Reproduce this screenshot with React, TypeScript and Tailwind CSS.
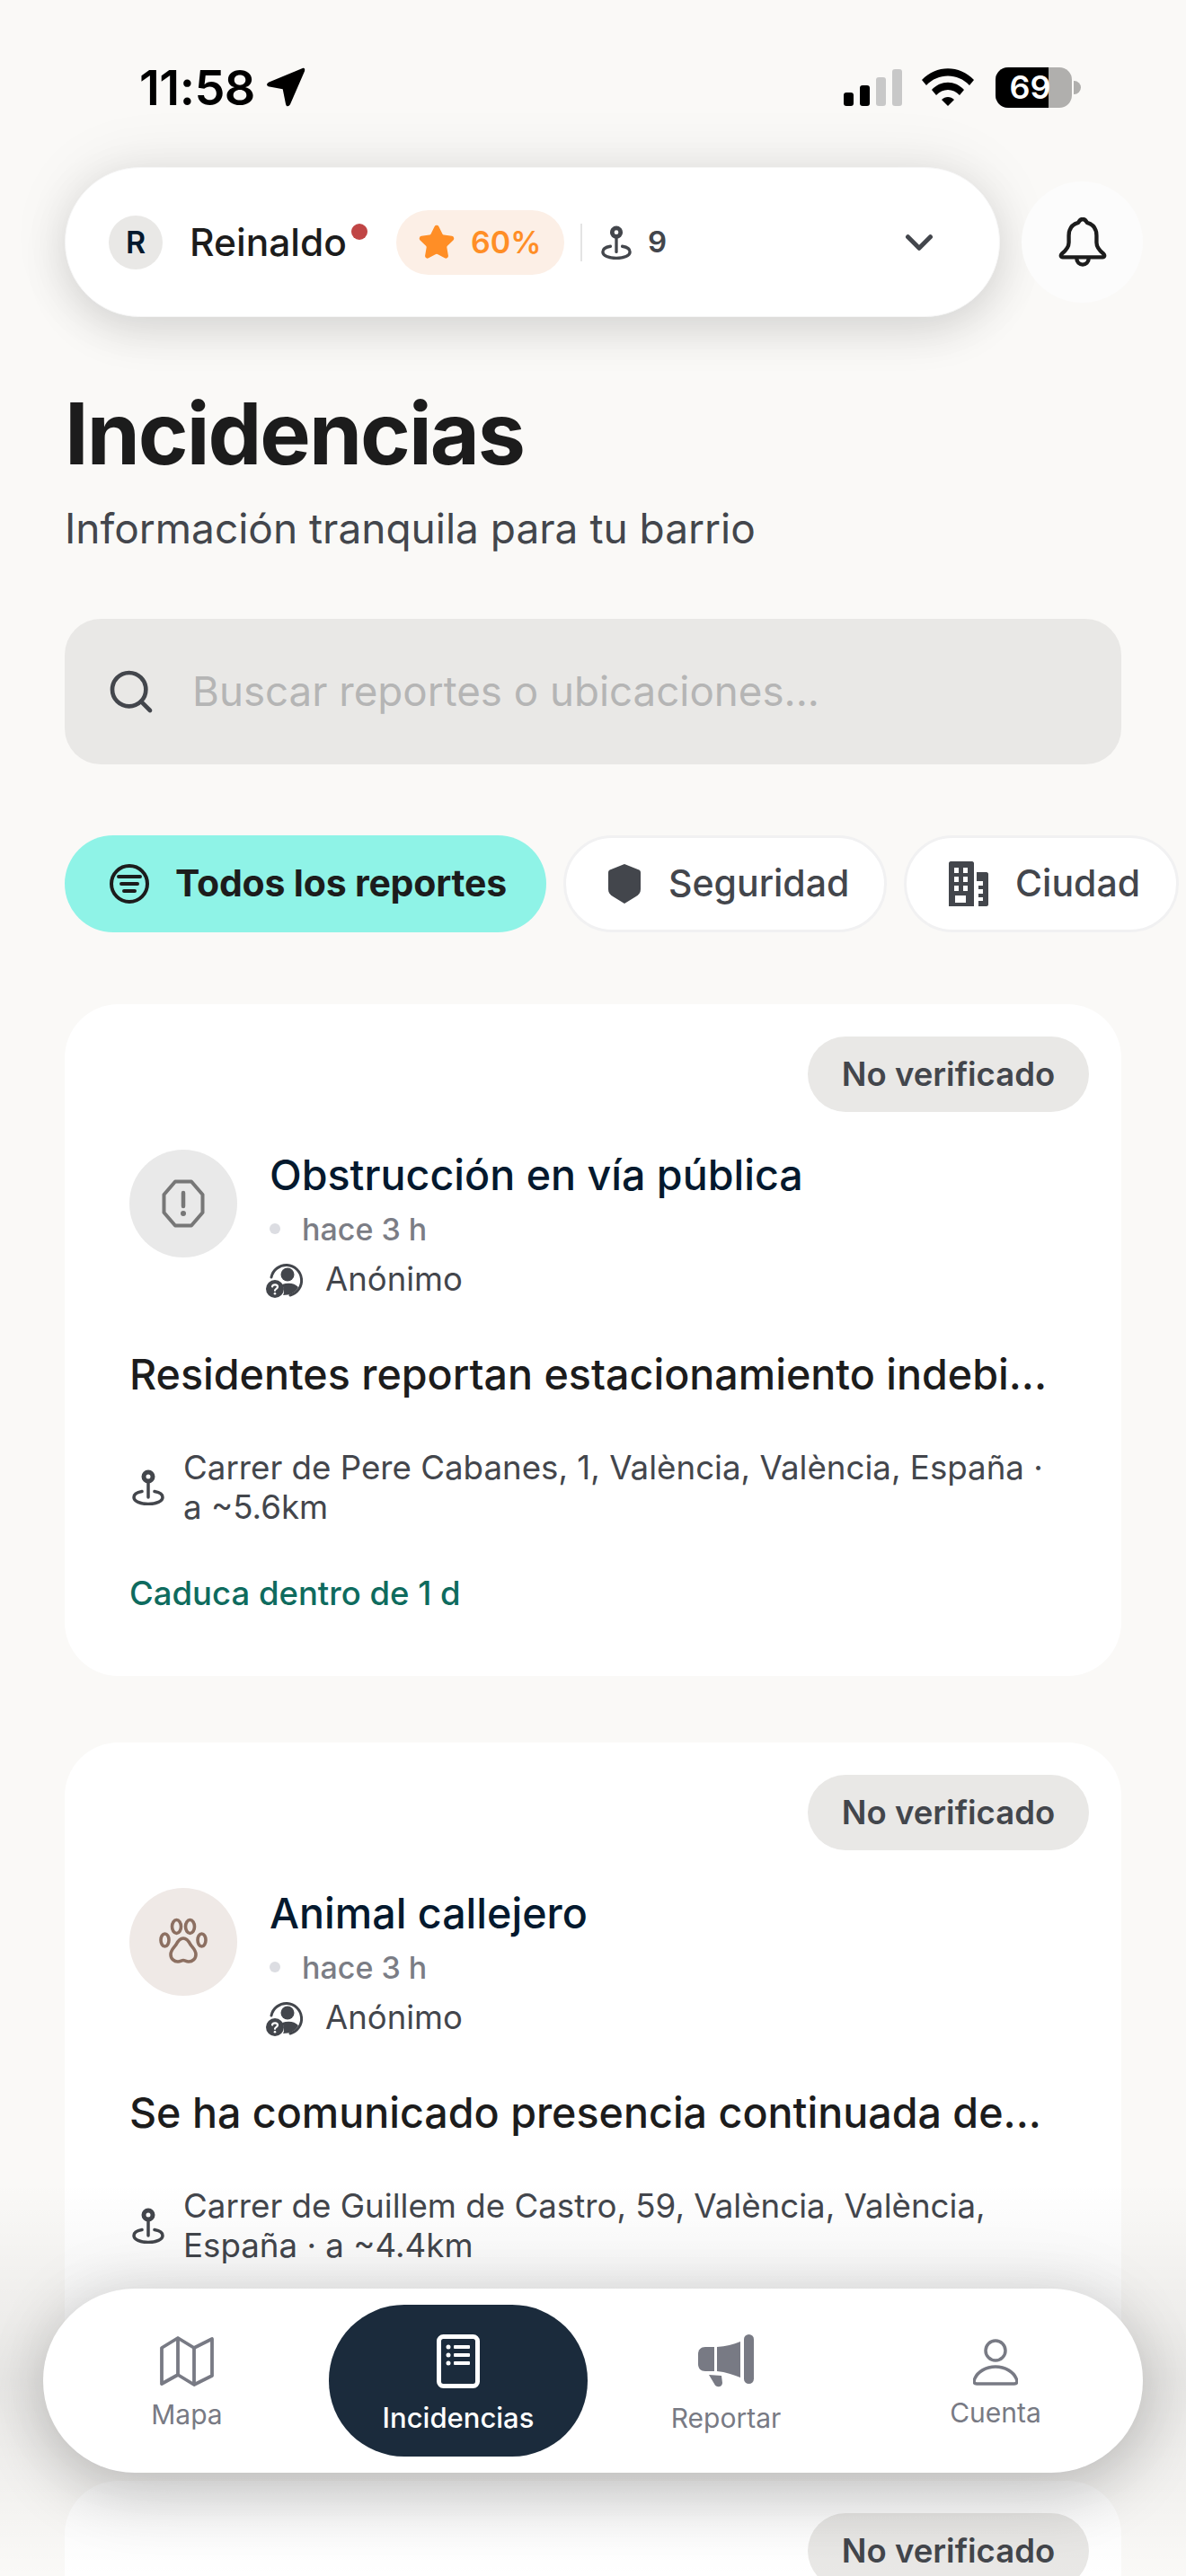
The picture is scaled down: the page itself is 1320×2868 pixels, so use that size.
import {ReactNode} from "react";
import {ChevronDown, Search, Star} from "lucide-react";

const PinIcon = ({className}: {className: string}) => (
    <svg viewBox="0 0 36 40" className={className} fill="none">
        <circle cx="18" cy="8" r="5" stroke="currentColor" strokeWidth="5"/>
        <path d="M18 14v17" stroke="currentColor" strokeWidth="3.500" strokeLinecap="round"/>
        <path d="M11 24.500C5 25.500 2 28 2 31c0 4.500 7 7.500 16 7.500s16-3 16-7.500c0-3-3-5.500-9-6.500" stroke="currentColor" strokeWidth="3.500" strokeLinecap="round"/>
    </svg>
);

const AnonIcon = () => (
    <svg viewBox="0 0 44 44" className="w-[44px] h-[44px] text-[#43464c]" fill="none">
        <path d="M6 20a17 17 0 1 1 21 20" stroke="currentColor" strokeWidth="3" strokeLinecap="round"/>
        <circle cx="24" cy="17" r="7.500" fill="currentColor"/>
        <path d="M18 28c7-2.500 14-1.500 18 3-3 6-9 9-17 9 2-3 1-8-1-12z" fill="currentColor"/>
        <circle cx="10" cy="33" r="10" fill="currentColor"/>
        <path d="M7 30.500c.5-2.800 6-2.800 6 .3 0 2-3 2-3 4" stroke="#fff" strokeWidth="2.200" strokeLinecap="round"/>
        <circle cx="10" cy="38.200" r="1.300" fill="#fff"/>
    </svg>
);

const StopIcon = () => (
    <svg viewBox="0 0 48 54" className="w-[48px] h-[54px] text-[#777777]" fill="none">
        <path d="M15 2.500h18L45.500 17v20L33 51.500H15L2.500 37V17z" stroke="currentColor" strokeWidth="4" strokeLinejoin="round"/>
        <path d="M24 15v15" stroke="currentColor" strokeWidth="4.500" strokeLinecap="round"/>
        <circle cx="24" cy="38" r="3" fill="currentColor"/>
    </svg>
);

const PawIcon = () => (
    <svg viewBox="0 0 54 54" className="w-[54px] h-[54px] text-[#8c6f61]" fill="none" stroke="currentColor" strokeWidth="3.600">
        <ellipse cx="19.500" cy="10" rx="5" ry="7.500"/>
        <ellipse cx="34.500" cy="10" rx="5" ry="7.500"/>
        <ellipse cx="6.500" cy="25" rx="4.500" ry="7"/>
        <ellipse cx="47.500" cy="25" rx="4.500" ry="7"/>
        <path d="M27 23c-4 0-6 3-8 7-2 3-6 6-6 11 0 5 4 8 8 8 3 0 4-1.500 6-1.500s3 1.500 6 1.500c4 0 8-3 8-8 0-5-4-8-6-11-2-4-4-7-8-7z"/>
    </svg>
);

const Badge = () => (
    <div className="flex justify-end -mr-[36px]">
        <span className="h-[84px] w-[313px] rounded-full bg-[#e9e8e6] text-[#43464c] text-[36.500px] font-semibold flex items-center justify-center">No verificado</span>
    </div>
);

const Report = ({title, desc, address, icon, iconBg, footer}: {
    title: string, desc: string, address: string[], icon: ReactNode, iconBg: string, footer?: string
}) => (
    <div className="bg-white rounded-[60px] h-[748px] shrink-0 pt-[36px] px-[72px]">
        <Badge/>
        <div className="flex mt-[42px]">
            <div className={`w-[120px] h-[120px] rounded-full flex items-center justify-center shrink-0 ${iconBg}`}>{icon}</div>
            <div className="ml-[36px]">
                <div className="text-[46.600px] leading-[56px] text-[#04192e] font-[450]">{title}</div>
                <div className="flex items-center h-[54px] mt-[5px] text-[34px] text-[#7b7d85] font-medium">
                    <span className="w-[12px] h-[12px] rounded-full bg-[#dcdde2] mr-[24px]"/>
                    hace 3 h
                </div>
                <div className="flex items-center h-[54px] text-[36.500px] text-[#43464c] -ml-[4px] mt-[2px]">
                    <AnonIcon/>
                    <span className="ml-[22px]">Anónimo</span>
                </div>
            </div>
        </div>
        <div className="mt-[51px] text-[46.600px] leading-[56px] text-[#1c1c1c] font-[450] whitespace-nowrap">{desc}</div>
        <div className="flex items-center mt-[54px] h-[88px]">
            <PinIcon className="w-[36px] h-[40px] text-[#43464c] shrink-0 ml-[3px]"/>
            <div className="ml-[21px] text-[36.700px] leading-[44px] text-[#43464c] whitespace-nowrap">
                {address.map((line) => <div key={line}>{line}</div>)}
            </div>
        </div>
        {footer && <div className="mt-[52px] text-[36.500px] leading-[44px] font-medium text-[#0e6b5e]">{footer}</div>}
    </div>
);

const App = () => {
    return (
        <div className="relative w-[1320px] h-[2868px] overflow-hidden bg-[#faf9f7] font-['Inter',sans-serif]">
            <div className="flex items-center justify-between h-[120px] pt-[74px] pl-[155px] pr-[117px]">
                <div className="flex items-center text-[54px] font-semibold text-black tracking-[-0.5px]">
                    11:58
                    <svg viewBox="0 0 40 40" className="w-[44px] h-[44px] ml-[12px]" fill="black">
                        <path d="M37 1 3 15c-3 1.500-2.500 4 .5 4.500L17 22l3 15c.5 3 3 3 4.500.5L39 4c1-2.500-.5-4-2-3z"/>
                    </svg>
                </div>
                <div className="flex items-center">
                    <div className="flex items-end gap-[7px] h-[41px]">
                        <span className="w-[11px] h-[15px] rounded-[3px] bg-black"/>
                        <span className="w-[11px] h-[23px] rounded-[3px] bg-black"/>
                        <span className="w-[11px] h-[32px] rounded-[3px] bg-[#c8c8c8]"/>
                        <span className="w-[11px] h-[41px] rounded-[3px] bg-[#c8c8c8]"/>
                    </div>
                    <svg viewBox="0 0 58 42" className="w-[58px] h-[42px] ml-[22px]" fill="black">
                        <path d="M0 13C16-4 42-4 58 13l-5 6C40 5 18 5 5 19z"/>
                        <path d="M11 24c10-11 26-11 36 0l-5 6c-7-8-19-8-26 0z"/>
                        <path d="M22 35c4-4 10-4 14 0l-7 7z"/>
                    </svg>
                    <div className="relative ml-[24px] w-[85px] h-[45px] rounded-[14px] overflow-hidden bg-[#b0afad]">
                        <div className="absolute left-0 top-0 h-full w-[59px] bg-black"/>
                        <span className="absolute inset-0 flex items-center justify-center text-white text-[36px] leading-none font-semibold -ml-[8px]">69</span>
                    </div>
                    <span className="w-[8px] h-[15px] rounded-r-full bg-[#b0afad] ml-[2px]"/>
                </div>
            </div>

            <div className="flex items-center gap-[24px] mt-[66px] pl-[72px] pr-[48px]">
                <div className="flex items-center w-[1041px] h-[167px] rounded-[84px] bg-white border border-[#f6f6f6] pl-[48px] pr-[64px] shadow-[0_16px_50px_rgba(0,0,0,0.12),0_-6px_70px_rgba(0,0,0,0.07)]">
                    <span className="w-[60px] h-[60px] rounded-full bg-[#e9e8e6] text-[#04192e] text-[34px] font-semibold flex items-center justify-center">R</span>
                    <div className="relative ml-[30px] text-[42.500px] font-medium text-[#1c1c1c]">
                        Reinaldo
                        <span className="absolute -right-[23px] top-[11px] w-[18px] h-[18px] rounded-full bg-[#c04545]"/>
                    </div>
                    <div className="flex items-center ml-[55px] w-[187px] h-[72px] rounded-full bg-[#fcefe6] pl-[24px]">
                        <Star className="w-[42px] h-[42px] text-[#ff8e26]" fill="#ff8e26"/>
                        <span className="ml-[17px] text-[34px] font-semibold text-[#ff8e26]">60%</span>
                    </div>
                    <span className="w-[2px] h-[42px] bg-[#e4e4e4] ml-[18px]"/>
                    <PinIcon className="w-[34px] h-[38px] text-[#43464c] ml-[21px]"/>
                    <span className="ml-[18px] text-[33px] font-semibold text-[#43464c]">9</span>
                    <ChevronDown className="ml-auto w-[50px] h-[50px] text-[#43464c]" strokeWidth={2.4}/>
                </div>
                <div className="w-[135px] h-[135px] rounded-full bg-[#fcfcfc] flex items-center justify-center">
                    <svg viewBox="0 0 56 58" className="w-[54px] h-[56px] text-[#1c1c1c]" fill="none" stroke="currentColor" strokeWidth="4.500" strokeLinejoin="round">
                        <path d="M28 2c3 0 4 2 5 4 7 2 11 7 11 15v8c0 5 3 9 8 13 2 2 1 4-1 4H5c-2 0-3-2-1-4 5-4 8-8 8-13v-8c0-8 4-13 11-15 1-2 2-4 5-4z"/>
                        <path d="M21 47c0 10 14 10 14 0"/>
                    </svg>
                </div>
            </div>

            <div className="px-[72px] mt-[78px]">
                <h1 className="text-[95px] leading-[104px] font-bold text-[#1c1c1c] tracking-[-2px]">Incidencias</h1>
                <p className="mt-[25px] text-[46px] leading-[56px] text-[#43464c]">Información tranquila para tu barrio</p>
                <div className="flex items-center mt-[73px] h-[162px] rounded-[40px] bg-[#e9e8e6] pl-[46px]">
                    <Search className="w-[56px] h-[56px] text-[#43464c]" strokeWidth={2}/>
                    <span className="ml-[40px] text-[45.700px] text-[#b5b5b5]">Buscar reportes o ubicaciones...</span>
                </div>
                <div className="flex items-center gap-[19px] mt-[79px] h-[108px] w-[1300px]">
                    <div className="flex items-center w-[536px] h-[108px] rounded-[54px] bg-[#8ff3e7] pl-[50px]">
                        <svg viewBox="0 0 44 44" className="w-[44px] h-[44px] text-[#1c1c1c]" fill="none" stroke="currentColor" strokeWidth="4" strokeLinecap="round">
                            <circle cx="22" cy="22" r="20"/>
                            <path d="M10 14h24M13 22h18M16 30h12"/>
                        </svg>
                        <span className="ml-[29px] text-[41px] font-bold text-[#1c1c1c] tracking-[-0.2px]">Todos los reportes</span>
                    </div>
                    <div className="flex items-center w-[360px] h-[108px] rounded-[54px] bg-white border-[3px] border-[#f1f1f2] pl-[47px]">
                        <svg viewBox="0 0 36 44" className="w-[36px] h-[44px] text-[#43464c]" fill="currentColor">
                            <path d="M18 0 33 6c2 .8 3 1.500 3 3.500V28c0 4-2 6-5 8L18 44 5 36c-3-2-5-4-5-8V9.500C0 7.500 1 6.800 3 6z"/>
                        </svg>
                        <span className="ml-[31px] text-[41px] font-medium text-[#43464c]">Seguridad</span>
                    </div>
                    <div className="flex items-center w-[306px] h-[108px] rounded-[54px] bg-white border-[3px] border-[#f1f1f2] pl-[47px]">
                        <svg viewBox="0 0 44 50" className="w-[44px] h-[50px] text-[#43464c]" fill="currentColor">
                            <path fillRule="evenodd" d="M2 0h24c1 0 2 1 2 2v48H0V2c0-1 1-2 2-2zM6 7v6h5V7zm10 0v6h5V7zM6 17v6h5v-6zm10 0v6h5v-6zM6 27v6h5v-6zm10 0v6h5v-6zM7 38v8h12v-8z"/>
                            <path fillRule="evenodd" d="M31 12h11c1 0 2 1 2 2v34c0 1-1 2-2 2H33v-6h5v-4h-5v-4h5v-5h-5v-4h5v-5h-7z"/>
                        </svg>
                        <span className="ml-[30px] text-[41px] font-medium text-[#43464c]">Ciudad</span>
                    </div>
                </div>
                <div className="flex flex-col gap-[74px] mt-[80px]">
                    <Report
                        title="Obstrucción en vía pública"
                        desc="Residentes reportan estacionamiento indebi..."
                        address={["Carrer de Pere Cabanes, 1, València, València, España ·", "a ~5.6km"]}
                        icon={<StopIcon/>}
                        iconBg="bg-[#e9e9e9]"
                        footer="Caduca dentro de 1 d"
                    />
                    <Report
                        title="Animal callejero"
                        desc="Se ha comunicado presencia continuada de..."
                        address={["Carrer de Guillem de Castro, 59, València, València,", "España · a ~4.4km"]}
                        icon={<PawIcon/>}
                        iconBg="bg-[#efe9e6]"
                    />
                    <div className="bg-white rounded-[60px] h-[748px] shrink-0 pt-[36px] px-[72px]">
                        <Badge/>
                    </div>
                </div>
            </div>

            <div className="absolute left-0 right-0 top-[2430px] bottom-0 bg-gradient-to-b from-transparent via-[#00000012] to-transparent"/>
            <div className="absolute left-[48px] top-[2548px] w-[1224px] h-[205px] rounded-[102px] bg-white shadow-[0_24px_70px_rgba(0,0,0,0.2),0_-10px_80px_rgba(0,0,0,0.06)] flex items-center pl-[60px]">
                <div className="flex flex-col items-center w-[200px] text-[#787a84] mt-[6px]">
                    <svg viewBox="0 0 60 56" className="w-[60px] h-[56px]" fill="none" stroke="currentColor" strokeWidth="3.800" strokeLinejoin="round">
                        <path d="M2 13 20 2l18 11L58 3v41L38 54 20 43 2 53z"/>
                        <path d="M20 3v40M38 13v40"/>
                    </svg>
                    <span className="mt-[13px] text-[30px] leading-[36px]">Mapa</span>
                </div>
                <div className="flex flex-col items-center justify-center w-[288px] h-[169px] rounded-[84px] bg-[#1b2b3c] text-white shrink-0 ml-[58px] pt-[8px]">
                    <svg viewBox="0 0 48 60" className="w-[48px] h-[60px]" fill="none">
                        <rect x="2.500" y="2.500" width="43" height="55" rx="5" stroke="white" strokeWidth="5"/>
                        <g fill="white">
                            <circle cx="13" cy="14" r="2.500"/><rect x="19" y="12" width="18" height="4" rx="1"/>
                            <circle cx="13" cy="23" r="2.500"/><rect x="19" y="21" width="18" height="4" rx="1"/>
                            <circle cx="13" cy="32" r="2.500"/><rect x="19" y="30" width="18" height="4" rx="1"/>
                        </g>
                    </svg>
                    <span className="mt-[15px] text-[31px] leading-[36px] font-medium">Incidencias</span>
                </div>
                <div className="flex flex-col items-center w-[200px] text-[#787a84] ml-[54px] mt-[8px]">
                    <svg viewBox="0 0 62 60" className="w-[62px] h-[60px]" fill="currentColor">
                        <path d="M18 14H8c-5 0-8 3-8 8v11c0 5 3 8 8 8h10z"/>
                        <path d="M21 14c10-.5 18-3 26-6v40c-8-3-16-6-26-7z"/>
                        <rect x="51" y="0" width="11" height="55" rx="5.500"/>
                        <path d="M12 45l14 1 1 8c0 5-7 6-9 1z"/>
                    </svg>
                    <span className="mt-[15px] text-[30px] leading-[36px]">Reportar</span>
                </div>
                <div className="flex flex-col items-center w-[200px] text-[#787a84] ml-[100px] mt-[7px]">
                    <svg viewBox="0 0 50 52" className="w-[50px] h-[52px]" fill="none" stroke="currentColor" strokeWidth="3.500">
                        <circle cx="25" cy="13" r="11"/>
                        <path d="M4 50c-4 0-3-4-2-6 3-7 12-13 23-13s20 6 23 13c1 2 2 6-2 6z" strokeLinejoin="round"/>
                    </svg>
                    <span className="mt-[12px] text-[30px] leading-[36px]">Cuenta</span>
                </div>
            </div>
        </div>
    )
};

export default App
